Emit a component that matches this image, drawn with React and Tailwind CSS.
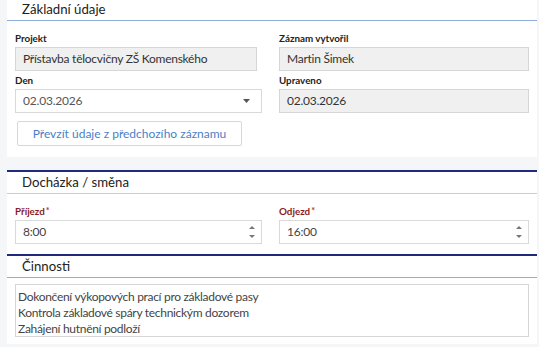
import React from 'react';

const font = { fontFamily: 'Lato, "Noto Sans", sans-serif' };

const Label = ({ children, required, tall }) => (
  <div className={`${tall ? 'h-[18px]' : 'h-[17px]'} flex items-end pb-[3px] text-[9.8px] font-bold leading-none ${required ? 'text-[#8a1c24]' : 'text-[#222]'}`}>
    {children}
    {required && <span className="relative -top-[2px] ml-[1px] text-[9px] text-[#b03a3a]">*</span>}
  </div>
);

const ReadOnly = ({ value, className = '' }) => (
  <div className={`h-[24px] flex items-center px-[7px] bg-[#f0f0f0] border border-[#d6d6d6] text-[12px] tracking-[-0.25px] text-[#333] ${className}`}>
    {value}
  </div>
);

const Spinner = () => (
  <div className="flex flex-col items-center gap-[6px] mr-[6px]">
    <svg width="6" height="3" viewBox="0 0 6 3"><path d="M3 0L6 3H0z" fill="#777" /></svg>
    <svg width="6" height="3" viewBox="0 0 6 3"><path d="M0 0h6L3 3z" fill="#777" /></svg>
  </div>
);

const TimeInput = ({ value }) => (
  <div className="h-[24px] flex items-center justify-between pl-[7px] bg-white border border-[#d9d9d9] text-[12px] tracking-[-0.2px] text-[#444]">
    <span>{value}</span>
    <Spinner />
  </div>
);

const SectionHeader = ({ title, line }) => (
  <div className={`h-[22px] flex items-center pl-[15px] border-b ${line} text-[13.2px] text-[#222]`}>
    {title}
  </div>
);

export default function App() {
  return (
    <div className="bg-[#f4f6f8] pl-[7px] pr-[2px] pb-[3px]" style={font}>
      {/* Základní údaje */}
      <div className="bg-white">
        <div className="h-[21px] flex items-center pl-[15px] border-b border-[#8fadd8] text-[13.2px] text-[#222]">
          Základní údaje
        </div>
        <div className="px-[8px] pt-[9px] pb-[11px]">
          <div className="grid grid-cols-[247px_250px] gap-x-[17px]">
            <div>
              <Label>Projekt</Label>
              <ReadOnly value="Přístavba tělocvičny ZŠ Komenského" className="w-[242px]" />
              <Label tall>Den</Label>
              <div className="h-[24px] flex items-center justify-between px-[7px] bg-white border border-[#d9d9d9] text-[12px] tracking-[-0.2px] text-[#555]">
                <span>02.03.2026</span>
                <svg width="7" height="4" viewBox="0 0 7 4" className="mr-[4px]"><path d="M0 0h7L3.5 4z" fill="#555" /></svg>
              </div>
            </div>
            <div>
              <Label>Záznam vytvořil</Label>
              <ReadOnly value="Martin Šimek" />
              <Label tall>Upraveno</Label>
              <ReadOnly value="02.03.2026" />
            </div>
          </div>
          <button className="mt-[8px] ml-[2px] w-[225px] h-[25px] bg-white border border-[#d4d8dd] rounded-[2px] text-[12px] text-[#4a7fc8]">
            Převzít údaje z předchozího záznamu
          </button>
        </div>
      </div>

      <div className="h-[13px]" />

      {/* Docházka / směna */}
      <div className="bg-white border-t-2 border-[#1f2a7c]">
        <SectionHeader title="Docházka / směna" line="border-[#c6cfd9]" />
        <div className="px-[8px] pt-[9px] pb-[10px] grid grid-cols-[247px_250px] gap-x-[17px]">
          <div>
            <Label required>Příjezd</Label>
            <TimeInput value="8:00" />
          </div>
          <div>
            <Label required>Odjezd</Label>
            <TimeInput value="16:00" />
          </div>
        </div>
      </div>

      {/* Činnosti */}
      <div className="bg-white border-t-2 border-[#1f2a7c]">
        <SectionHeader title="Činnosti" line="border-[#8fadd8]" />
        <div className="px-[8px] pt-[6px] pb-[7px]">
          <div className="h-[53px] w-[514px] border border-[#d6d6d6] pl-[2px] pt-[4px] text-[12px] tracking-[-0.3px] leading-[16px] text-[#444]">
            <div>Dokončení výkopových prací pro základové pasy</div>
            <div>Kontrola základové spáry technickým dozorem</div>
            <div>Zahájení hutnění podloží</div>
          </div>
        </div>
      </div>
    </div>
  );
}
